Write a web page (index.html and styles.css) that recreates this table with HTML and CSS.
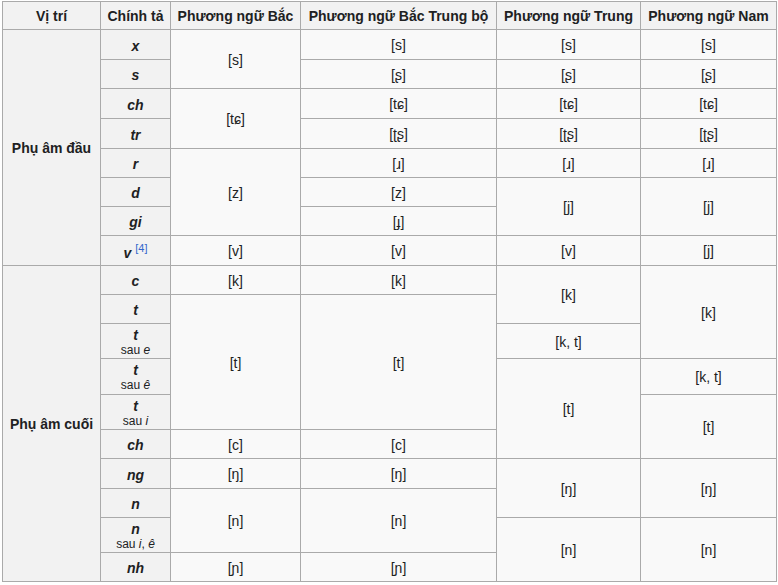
FILE: index.html
```html
<!DOCTYPE html>
<html lang="vi">
<head>
<meta charset="utf-8">
<title>Phụ âm</title>
<link rel="stylesheet" href="styles.css">
</head>
<body>
<table class="wikitable">
  <colgroup>
    <col class="c1"><col class="c2"><col class="c3"><col class="c4"><col class="c5"><col class="c6">
  </colgroup>
  <thead>
    <tr class="hd">
      <th>Vị trí</th>
      <th>Chính tả</th>
      <th>Phương ngữ Bắc</th>
      <th>Phương ngữ Bắc Trung bộ</th>
      <th>Phương ngữ Trung</th>
      <th>Phương ngữ Nam</th>
    </tr>
  </thead>
  <tbody>
    <tr class="h30">
      <th rowspan="8">Phụ âm đầu</th>
      <th class="or">x</th>
      <td rowspan="2">[s]</td>
      <td>[s]</td><td>[s]</td><td>[s]</td>
    </tr>
    <tr class="h29">
      <th class="or">s</th>
      <td>[ʂ]</td><td>[ʂ]</td><td>[ʂ]</td>
    </tr>
    <tr class="h30">
      <th class="or">ch</th>
      <td rowspan="2">[tɕ]</td>
      <td>[tɕ]</td><td>[tɕ]</td><td>[tɕ]</td>
    </tr>
    <tr class="h30">
      <th class="or">tr</th>
      <td>[ʈʂ]</td><td>[ʈʂ]</td><td>[ʈʂ]</td>
    </tr>
    <tr class="h29">
      <th class="or">r</th>
      <td rowspan="3">[z]</td>
      <td>[ɹ]</td><td>[ɹ]</td><td>[ɹ]</td>
    </tr>
    <tr class="h29">
      <th class="or">d</th>
      <td>[z]</td>
      <td rowspan="2">[j]</td>
      <td rowspan="2">[j]</td>
    </tr>
    <tr class="h29">
      <th class="or">gi</th>
      <td>[ɟ]</td>
    </tr>
    <tr class="h30">
      <th class="or">v <sup class="ref">[4]</sup></th>
      <td>[v]</td><td>[v]</td><td>[v]</td><td>[j]</td>
    </tr>
    <tr class="h29">
      <th rowspan="10">Phụ âm cuối</th>
      <th class="or">c</th>
      <td>[k]</td><td>[k]</td>
      <td rowspan="2">[k]</td>
      <td rowspan="3">[k]</td>
    </tr>
    <tr class="h29">
      <th class="or">t</th>
      <td rowspan="4">[t]</td>
      <td rowspan="4">[t]</td>
    </tr>
    <tr class="h35">
      <th class="or">t<br><small class="note">sau <i>e</i></small></th>
      <td>[k, t]</td>
    </tr>
    <tr class="h36">
      <th class="or">t<br><small class="note">sau <i>ê</i></small></th>
      <td rowspan="3">[t]</td>
      <td>[k, t]</td>
    </tr>
    <tr class="h35">
      <th class="or">t<br><small class="note">sau <i>i</i></small></th>
      <td rowspan="2">[t]</td>
    </tr>
    <tr class="h29">
      <th class="or">ch</th>
      <td>[c]</td><td>[c]</td>
    </tr>
    <tr class="h30">
      <th class="or">ng</th>
      <td>[ŋ]</td><td>[ŋ]</td>
      <td rowspan="2">[ŋ]</td>
      <td rowspan="2">[ŋ]</td>
    </tr>
    <tr class="h29">
      <th class="or">n</th>
      <td rowspan="2">[n]</td>
      <td rowspan="2">[n]</td>
    </tr>
    <tr class="h35">
      <th class="or">n<br><small class="note">sau <i>i</i>, <i>ê</i></small></th>
      <td rowspan="2">[n]</td>
      <td rowspan="2">[n]</td>
    </tr>
    <tr class="h29">
      <th class="or">nh</th>
      <td>[ɲ]</td><td>[ɲ]</td>
    </tr>
  </tbody>
</table>
</body>
</html>
```

FILE: styles.css
```css
html, body {
  margin: 0;
  padding: 0;
  background: #ffffff;
}

body {
  font-family: "Liberation Sans", Arial, "DejaVu Sans", sans-serif;
  font-size: 14px;
  color: #202122;
}

.wikitable {
  margin: 1px 0 0 2px;
  width: 774px;
  table-layout: fixed;
  border-collapse: collapse;
  border: 1px solid #aaaaaa;
  background: #f9f9f9;
}

.c1 { width: 98px; }
.c2 { width: 70px; }
.c3 { width: 130px; }
.c4 { width: 196px; }
.c5 { width: 144px; }
.c6 { width: 136px; }

.wikitable th,
.wikitable td {
  border: 1px solid #aaaaaa;
  padding: 2px 4px 0;
  text-align: center;
  vertical-align: middle;
  line-height: 15px;
}

.wikitable th {
  background: #f2f2f2;
  font-weight: bold;
}

.wikitable th.or {
  font-style: italic;
  line-height: 14px;
}

.hd { height: 28px; }
.h29 { height: 29px; }
.h30 { height: 30px; }
.h35 { height: 35px; }
.h36 { height: 36px; }

.note {
  font-size: 12px;
  font-weight: normal;
  font-style: normal;
}

.note i {
  font-style: italic;
}

.ref {
  font-size: 11px;
  font-weight: normal;
  font-style: normal;
  color: #3366cc;
  vertical-align: 6px;
  line-height: 1;
}
```
